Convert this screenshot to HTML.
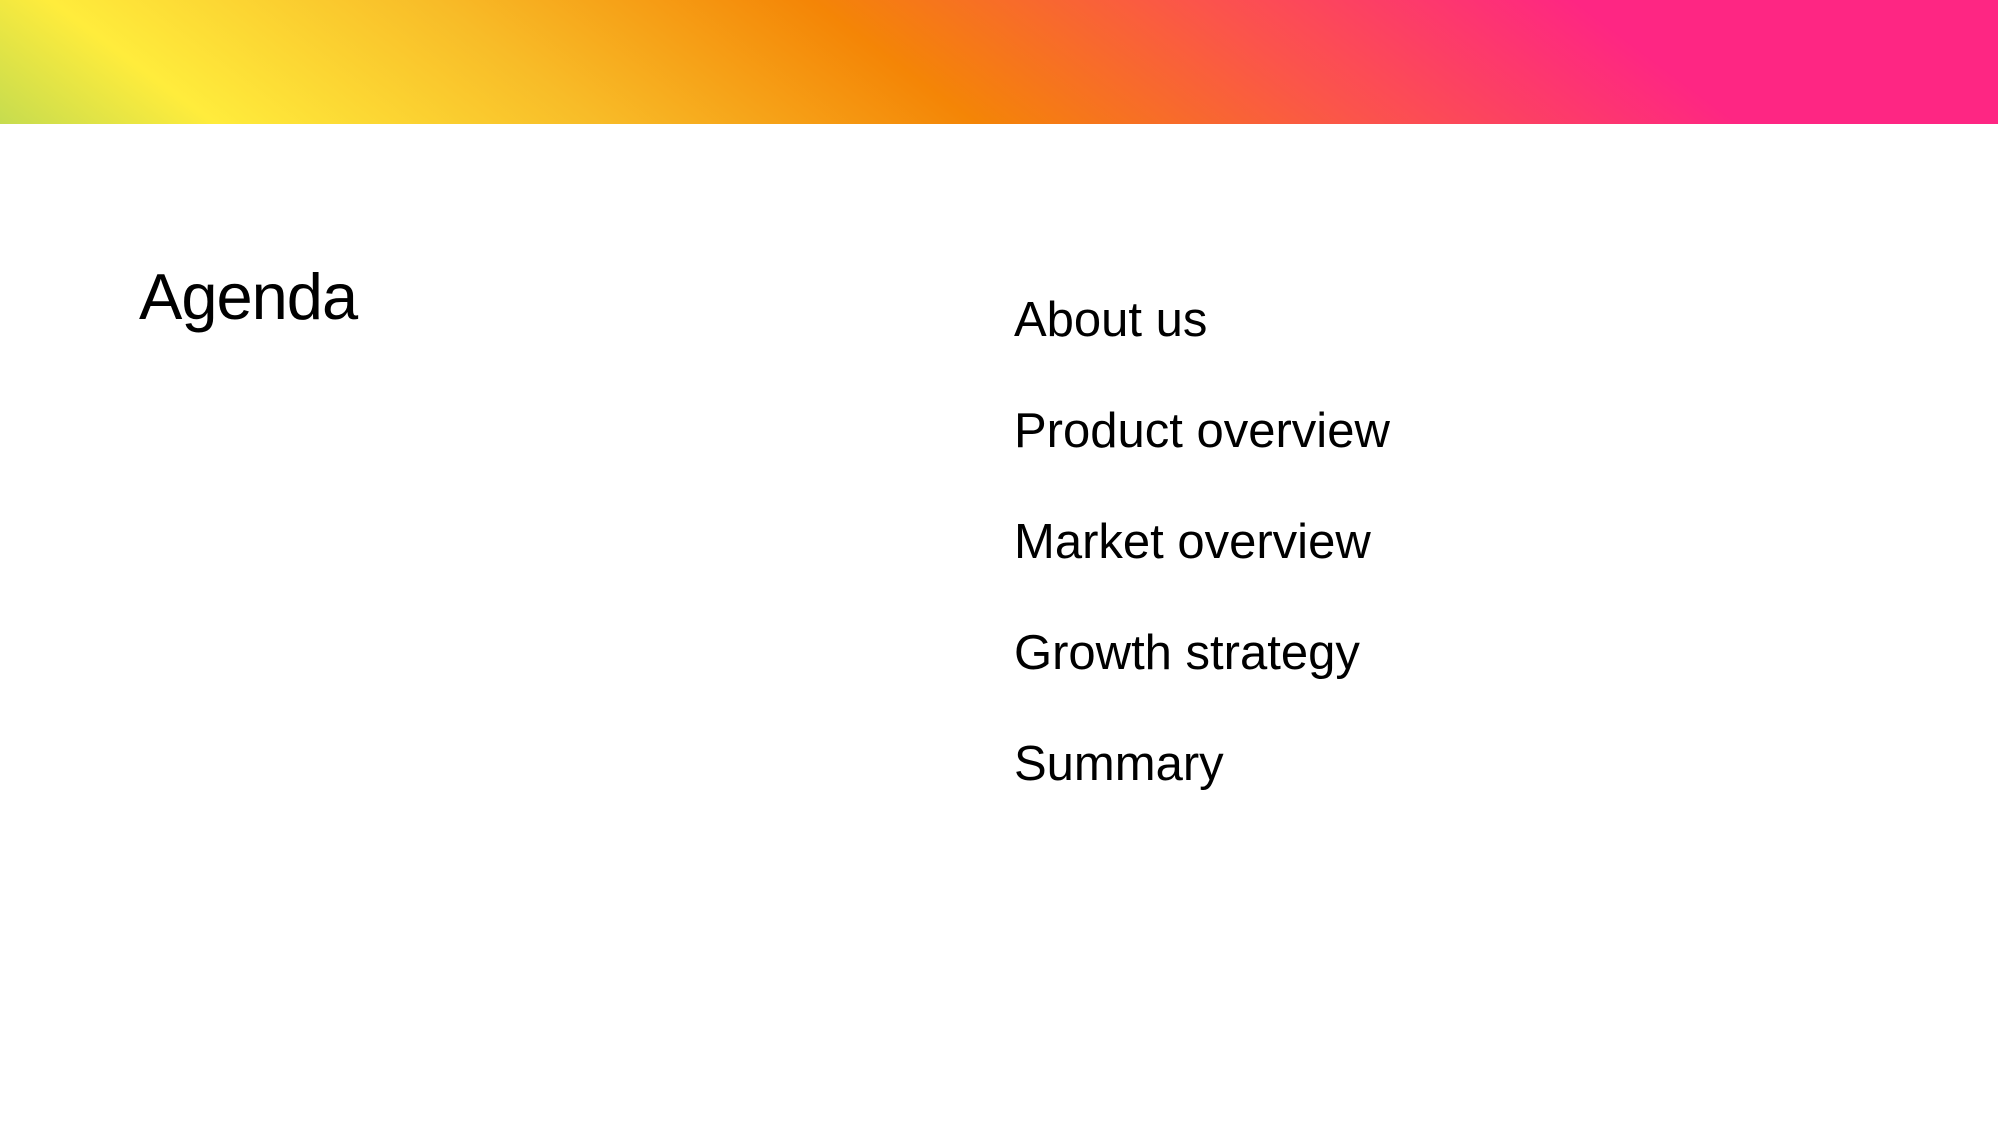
<!DOCTYPE html>
<html><head><meta charset="utf-8"><style>
html,body{margin:0;padding:0;background:#fff;}
body{width:2001px;height:1125px;position:relative;overflow:hidden;font-family:"Liberation Sans",Arial,sans-serif;color:#000;}
.t{position:absolute;white-space:nowrap;line-height:1;}
.i{left:1014px;font-size:49px;}
</style></head><body>
<svg style="position:absolute;left:0;top:0" width="2001" height="124">
<defs><linearGradient id="g" gradientUnits="userSpaceOnUse" x1="0" y1="124" x2="714" y2="-832">
<stop offset="0" stop-color="#c6dc4f"/>
<stop offset="0.108" stop-color="#ffec3c"/>
<stop offset="0.3" stop-color="#f8bc28"/>
<stop offset="0.49" stop-color="#f48506"/>
<stop offset="0.68" stop-color="#fb554a"/>
<stop offset="0.873" stop-color="#fe2683"/>
<stop offset="1" stop-color="#fe2683"/>
</linearGradient></defs>
<rect x="0" y="0" width="1998" height="124" fill="url(#g)"/>
</svg>
<div class="t" style="left:139px;top:264px;font-size:65px;letter-spacing:-1px;">Agenda</div>
<div class="t i" style="top:296px;">About us</div>
<div class="t i" style="top:407px;">Product overview</div>
<div class="t i" style="top:518px;">Market overview</div>
<div class="t i" style="top:629px;">Growth strategy</div>
<div class="t i" style="top:740px;">Summary</div>
</body></html>
